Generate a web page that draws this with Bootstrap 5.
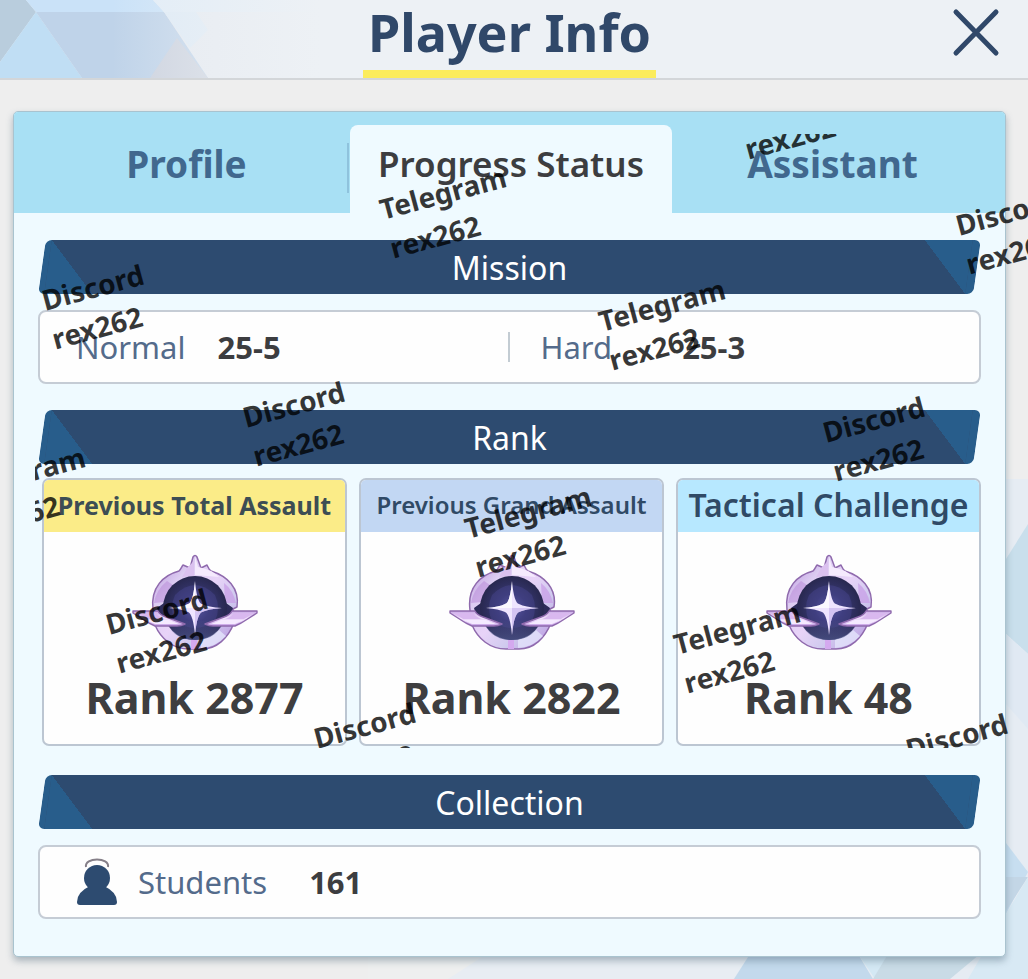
<!DOCTYPE html>
<html lang="en">
<head>
<meta charset="utf-8">
<meta name="viewport" content="width=device-width, initial-scale=1">
<title>Player Info</title>
<link href="https://cdn.jsdelivr.net/npm/bootstrap@5.3.0/dist/css/bootstrap.min.css" rel="stylesheet">
<style>
:root{--navy:#2d4b70;--ink:#3c3d40;--line:#bcc6d2}
body{font-family:"Noto Sans",sans-serif;background:#eee;color:var(--ink);overflow-x:hidden}
.page-top{height:80px;background:#edf1f5;border-bottom:2px solid #d3d6d9;padding-right:9px}
.top-art{position:absolute;left:0;top:0;z-index:0}
.title{font-size:52px;line-height:64px;font-weight:700;color:#304869;border-bottom:8px solid #fbec5c;height:78px;padding:0 5px 6px;z-index:1}
.close-btn{position:absolute;right:24px;top:5px;z-index:1}
.backdrop-art{position:absolute;right:0;bottom:0;z-index:0}
.stage{padding:31px 22px 22px 13px}
.panel{z-index:1;background:#effaff;border:1px solid #a9c3cf;border-radius:5px;box-shadow:0 4px 7px rgba(70,95,115,.4)}
.tabs{background:#a8e0f4;height:101px;padding-top:13px;border-radius:4px 4px 0 0}
.tab{font-size:37px;line-height:48px;font-weight:700;color:#41688e;padding:4px 12px 15px 0}
.tab:first-child{padding-left:12px;padding-right:0}
.tab.active{flex:0 0 32.5%;font-size:35px;font-weight:600;background:#effaff;color:var(--ink);border-radius:8px 8px 0 0}
.tab-sep{border-right:2px solid #8fc3dd;margin:18px 1px 20px 0}
.panel-body{padding:27px 24px 37px}
.banner{isolation:isolate;height:54px;font-size:32px;line-height:56px;font-weight:400;color:#fff}
.banner::before{content:"";position:absolute;inset:0 4px;z-index:-1;border-radius:6px;transform:skewX(-8deg);
 background:
 linear-gradient(to top right,#285d8b 50%,transparent 50%) 6px 0/48px 100% no-repeat,
 linear-gradient(#285d8b,#285d8b) 0 0/6px 100% no-repeat,
 linear-gradient(to top right,transparent 50%,#285d8b 50%) right 8px top 0/48px 100% no-repeat,
 linear-gradient(#285d8b,#285d8b) right/8px 100% no-repeat,
 var(--navy)}
.second{margin:26px 0 14px}
.third{margin:29px 0 0}
.info-box{height:74px;background:#fefefe;border:2px solid #c5ccd5;border-radius:8px;font-size:31px;line-height:48px}
.info-box dt{font-weight:400;color:#546b8b}
.info-box dd{font-weight:700;margin:0}
.divider{width:2px;height:30px;background:#c3ccd3}
.mission-cell{padding-left:36px}
.mission-cell dd{margin-left:32px}
.hard-cell{padding-left:31px}
.hard-cell dd{margin-left:70px}
.students{padding-left:36px}
.students dt{margin-left:20px}
.students dd{margin-left:42px}
.cards{gap:12px}
.rank-card{height:268px;background:#fefefe;border:2px solid var(--line);border-radius:7px;overflow:hidden}
.rank-head{height:52px;line-height:50px;font-size:25px;font-weight:700;color:#304a66;white-space:nowrap;margin:0}
.rank-head.wide{font-size:32px;font-weight:600}
.bg-total{background:#fbec88;color:#3d4d54}
.bg-grand{background:#c2d7f3;font-size:24px;font-weight:600}
.bg-tactical{background:#b7e8ff}
.emblem-pic{margin-top:21px}
.rank-value{margin-top:19px;font-size:43px;line-height:56px;font-weight:700;color:#3e3e40}
.overlay{position:absolute;left:35px;top:134px;width:calc(100% - 35px);height:614px;z-index:3;pointer-events:none;overflow:hidden;
 font-size:28px;font-weight:700;fill:#000;fill-opacity:.78}
</style>
</head>
<body class="position-relative min-vh-100">
<svg class="position-absolute" width="0" height="0" aria-hidden="true">
<defs>
<linearGradient id="metal" x1="0" y1="0" x2="1" y2="1"><stop offset="0" stop-color="#b088d6"/><stop offset=".28" stop-color="#ddcdf2"/><stop offset=".5" stop-color="#e8d3f8"/><stop offset=".7" stop-color="#cfcaee"/><stop offset="1" stop-color="#b98fe0"/></linearGradient>
<linearGradient id="wing" x1="0" y1="0" x2="0" y2="1"><stop offset="0" stop-color="#c9a9e6"/><stop offset=".5" stop-color="#f2e2fd"/><stop offset="1" stop-color="#c6a0e6"/></linearGradient>
<radialGradient id="night"><stop offset="0" stop-color="#6361ad"/><stop offset=".45" stop-color="#383873"/><stop offset="1" stop-color="#28284f"/></radialGradient>
<linearGradient id="dusk" x1="0" y1="0" x2="0" y2="1"><stop offset="0" stop-color="#4b4f86" stop-opacity="0"/><stop offset="1" stop-color="#4b5388"/></linearGradient>
<linearGradient id="fade" x1="0" x2="1" y1="0" y2="0"><stop offset=".35" stop-color="#edf1f5" stop-opacity="0"/><stop offset="1" stop-color="#edf1f5"/></linearGradient>
<symbol id="emblem" viewBox="0 0 128 98">
<path d="M22 57C19 34 33 22 48 18C50 16 51 13 52 12L59 15L62 4Q64 1 66 4L70 15L76 12C77 14 78 17 80 18C96 23 109 35 106 54L102 56L103 70C97 85 86 96 71 96H58C42 96 30 86 24 72Z" fill="url(#metal)" stroke="#8f6aad" stroke-width="1.5" stroke-linejoin="round"/>
<path d="M64 3L67 14Q80 16 88 24L64 22Z" fill="#f5eafd"/><path d="M56 15L63 8V23L51 24Z" fill="#dbc1ef"/>
<path d="M23 50Q25 37 36 28L42 32Q34 41 34 49Z" fill="#b98cd9" opacity=".55"/><path d="M93 30Q102 37 105 50L94 50Z" fill="#c79be5" opacity=".7"/>
<path d="M60 86H66V96H60Z" fill="#d4a9ef"/><path d="M70 86L88 77L95 83Q85 94 70 95Z" fill="#e3e5fb" opacity=".8"/>
<path d="M26 55L33 50L40 58L40 72L28 62ZM102 55L95 50L88 58V72L100 62Z" fill="#2d2b58"/>
<circle cx="64" cy="55" r="32" fill="url(#night)"/>
<path d="M44 42Q64 22 84 42Q90 55 84 68Q64 82 44 68Q38 55 44 42Z" fill="#494690" opacity=".45"/>
<path d="M34 64Q64 72 94 64Q88 87 64 87Q40 87 34 64Z" fill="url(#dusk)" opacity=".8"/>
<g id="emblem-wing"><path d="M2 58H27Q29 62 35 64L54 71Q50 73 46 73H24Q17 70 13 67L2 60Z" fill="url(#wing)" stroke="#8f6aad" stroke-width="1.4" stroke-linejoin="round"/>
<path d="M5 60H25Q28 64 34 66H15Z" fill="#d9b8ef"/><path d="M15 67H38L48 71H24Z" fill="#f5eaff"/></g>
<use href="#emblem-wing" transform="matrix(-1 0 0 1 128 0)"/>
<path d="M64 28Q66 50 71 51Q77 54 91 55Q77 56 71 59Q66 61 64 82Q62 61 57 59Q51 56 38 55Q51 54 57 51Q62 50 64 28Z" fill="#efe5ff"/>
<path d="M64 28Q62 50 57 51Q51 54 38 55H64Z" fill="#fff" opacity=".75"/><path d="M64 55H91Q77 56 71 59Q66 61 64 82Z" fill="#c9b7ee" opacity=".7"/>
</symbol>
</defs>
</svg>

<header class="page-top position-relative d-flex justify-content-center">
<svg class="top-art" width="320" height="78" aria-hidden="true">
<path d="M0 0H320V78H0Z" fill="#e7ebf1"/>
<path d="M0 0H26L36 12L0 62Z" fill="#b9cddd"/><path d="M36 12L0 62V78H82Z" fill="#c0def4"/>
<path d="M26 0H153L164 12H36Z" fill="#cae2f8"/><path d="M36 12H164L208 78H82Z" fill="#bfd3e9"/>
<path d="M164 12H320V0H153Z" fill="#e2edf7"/><path d="M164 12L190 48L208 30L196 12Z" fill="#dfebf6"/><path d="M177 38L208 78H150Z" fill="#ccd2de"/>
<path d="M0 0H320V78H0Z" fill="url(#fade)"/>
</svg>
<h1 class="title mb-0 position-relative">Player Info</h1>
<button type="button" class="close-btn btn p-0 border-0 lh-1" aria-label="Close">
<svg width="56" height="56" viewBox="0 0 56 56" class="d-block"><path d="M8 7L48 48M48 7L8 48" stroke="#304869" stroke-width="5" stroke-linecap="round"/></svg>
</button>
</header>

<svg class="backdrop-art" width="660" height="500" aria-hidden="true">
<path d="M638 0H660V500H0L0 480L638 470Z" fill="#e6ecf3"/>
<path d="M0 478H220L200 500H0Z" fill="#eeefef"/>
<path d="M638 80L660 45V175L638 155Z" fill="#c9dfec"/><path d="M638 155L660 175V250L638 225Z" fill="#e0e9f3"/>
<path d="M638 364L660 393L638 435Z" fill="#c7def0"/><path d="M638 398H660L638 432Z" fill="#c3d6e6"/><path d="M638 435L660 398V500H600Z" fill="#d8e9f4"/>
<path d="M114 478H380L365 500H80Z" fill="#e8edf3"/><path d="M382 475H490L505 500H366Z" fill="#c3d9ec"/><path d="M490 475H520L507 500Z" fill="#d4e8f4"/><path d="M520 475H612L582 500H505Z" fill="#c9dbe6"/>
</svg>

<main class="stage position-relative">
<section class="panel position-relative">
<div class="tabs d-flex" role="tablist">
<button type="button" role="tab" aria-selected="false" class="tab btn border-0 rounded-0 col">Profile</button>
<span class="tab-sep"></span>
<button type="button" role="tab" aria-selected="true" class="tab active btn border-0 px-0">Progress Status</button>
<button type="button" role="tab" aria-selected="false" class="tab btn border-0 rounded-0 col">Assistant</button>
</div>
<div class="panel-body">
<h2 class="banner position-relative text-center mb-3">Mission</h2>
<dl class="info-box row g-0 align-items-center mb-0">
<div class="col-6 d-flex align-items-center mission-cell"><dt>Normal</dt><dd>25-5</dd><span class="divider ms-auto"></span></div>
<div class="col-6 d-flex align-items-center hard-cell"><dt>Hard</dt><dd>25-3</dd></div>
</dl>
<h2 class="banner second position-relative text-center">Rank</h2>
<div class="cards d-flex ms-1">
<article class="rank-card col text-center"><h3 class="rank-head bg-total">Previous Total Assault</h3><svg class="emblem-pic" width="128" height="98"><use href="#emblem"/></svg><div class="rank-value">Rank 2877</div></article>
<article class="rank-card col text-center"><h3 class="rank-head bg-grand">Previous Grand Assault</h3><svg class="emblem-pic" width="128" height="98"><use href="#emblem"/></svg><div class="rank-value">Rank 2822</div></article>
<article class="rank-card col text-center"><h3 class="rank-head wide bg-tactical">Tactical Challenge</h3><svg class="emblem-pic" width="128" height="98"><use href="#emblem"/></svg><div class="rank-value">Rank 48</div></article>
</div>
<h2 class="banner third position-relative text-center mb-3">Collection</h2>
<dl class="info-box d-flex align-items-center mb-0 students">
<svg width="42" height="48" viewBox="0 0 42 48" aria-hidden="true"><path d="M10 9C8 -1 34 -1 32 9" fill="none" stroke="#857f88" stroke-width="2"/><circle cx="21" cy="20" r="13" fill="#2d4b70"/><path d="M14 28H28Q41 34 41 44Q41 47 38 47H4Q1 47 1 44Q1 34 14 28Z" fill="#2d4b70"/></svg>
<dt>Students</dt><dd>161</dd>
</dl>
</div>
</section>
</main>

<svg class="overlay" aria-hidden="true">
<defs>
<g id="mark-d"><text transform="rotate(-15)">Discord<tspan x="0" y="40">rex262</tspan></text></g>
<g id="mark-t"><text transform="rotate(-15)">Telegram<tspan x="0" y="40">rex262</tspan></text></g>
</defs>
<g transform="translate(-34 -134)">
<use href="#mark-t" x="737" y="121"/><use href="#mark-t" x="382" y="220"/><use href="#mark-d" x="958" y="236"/>
<use href="#mark-d" x="44" y="311"/><use href="#mark-t" x="601" y="332"/><use href="#mark-d" x="245" y="428"/>
<use href="#mark-d" x="825" y="443"/><use href="#mark-t" x="-39" y="500"/><use href="#mark-t" x="467" y="539"/>
<use href="#mark-d" x="108" y="635"/><use href="#mark-t" x="676" y="655"/><use href="#mark-d" x="316" y="749"/><use href="#mark-d" x="908" y="760"/>
</g>
</svg>
<script src="https://cdn.jsdelivr.net/npm/bootstrap@5.3.0/dist/js/bootstrap.bundle.min.js"></script>
</body>
</html>
